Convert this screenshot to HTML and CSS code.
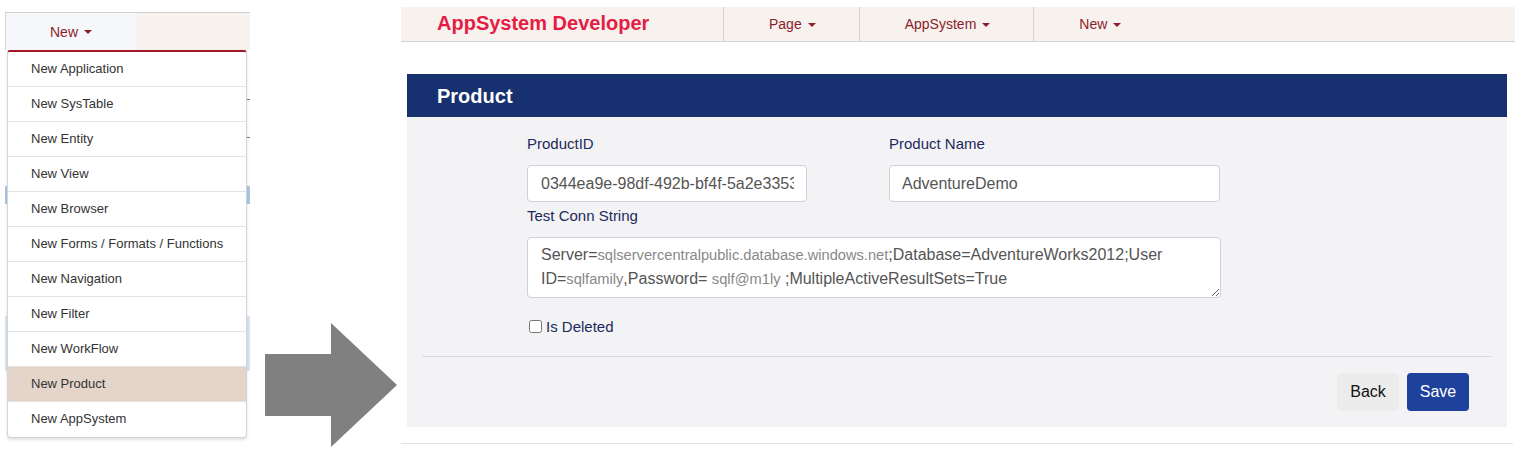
FILE: index.html
```html
<!DOCTYPE html>
<html>
<head>
<meta charset="utf-8">
<title>AppSystem Developer</title>
<link rel="stylesheet" href="styles.css">
</head>
<body>
<div class="page">
  <section class="left">
    <div class="lnav">
      <div class="nav-item open">New <span class="caret"></span></div>
      <div class="lnav-rest"></div>
    </div>
    <div class="under">
      <div class="under-tick t1"></div>
      <div class="under-tick t2"></div>
      <div class="under-band b1"></div>
      <div class="under-band b2"></div>
    </div>
    <ul class="dropdown">
      <li>New Application</li>
      <li>New SysTable</li>
      <li>New Entity</li>
      <li>New View</li>
      <li>New Browser</li>
      <li>New Forms / Formats / Functions</li>
      <li>New Navigation</li>
      <li>New Filter</li>
      <li>New WorkFlow</li>
      <li class="active">New Product</li>
      <li>New AppSystem</li>
    </ul>
  </section>

  <div class="arrow">
    <svg width="151" height="453" viewBox="0 0 151 453" aria-hidden="true">
      <polygon points="15,354 81,354 81,323 147,385 81,447 81,416 15,416" fill="#808080"/>
    </svg>
  </div>

  <section class="right">
    <nav class="navbar">
      <div class="brand">AppSystem Developer</div>
      <div class="nav-item">Page <span class="caret"></span></div>
      <div class="nav-item">AppSystem <span class="caret"></span></div>
      <div class="nav-item">New <span class="caret"></span></div>
    </nav>

    <div class="card">
      <div class="card-head">Product</div>
      <div class="card-body">
        <div class="form">
          <div class="field">
            <label class="lbl">ProductID</label>
            <input class="ctrl id-ctrl" type="text" value="0344ea9e-98df-492b-bf4f-5a2e33537c1d" readonly>
          </div>
          <div class="field">
            <label class="lbl">Product Name</label>
            <input class="ctrl name-ctrl" type="text" value="AdventureDemo">
          </div>
          <div class="field wide">
            <label class="lbl">Test Conn String</label>
            <div class="ctrl area">Server=<span class="dim">sqlservercentralpublic.database.windows.net</span>;Database=AdventureWorks2012;User<br>ID=<span class="dim">sqlfamily</span>,Password= <span class="dim">sqlf@m1ly</span> ;MultipleActiveResultSets=True</div>
          </div>
          <label class="check"><input type="checkbox" class="box">Is Deleted</label>
        </div>
        <hr class="sep">
        <div class="actions">
          <button class="btn back">Back</button>
          <button class="btn save">Save</button>
        </div>
      </div>
    </div>
    <div class="footer-line"></div>
  </section>
</div>
</body>
</html>
```

FILE: styles.css
```css
* { box-sizing: border-box; }

html, body {
  margin: 0;
  padding: 0;
  background: #ffffff;
  font-family: "Liberation Sans", Arial, sans-serif;
}

.page {
  display: flex;
  align-items: flex-start;
  width: 1523px;
  height: 453px;
  overflow: hidden;
}

/* ---------- left crop ---------- */
.left {
  position: relative;
  width: 250px;
  height: 453px;
  padding-left: 5px;
  padding-top: 12px;
  flex: none;
}

.lnav {
  display: flex;
  height: 38px;
  border-top: 1px solid #cfcfcf;
  background: #f7f2ee;
}

.lnav .nav-item {
  width: 131px;
  justify-content: center;
  padding: 0;
}

.nav-item.open {
  background: #f6f7fa;
}

.lnav-rest { flex: 1; }

.under {
  position: relative;
  height: 400px;
}

.under-tick {
  position: absolute;
  right: 0;
  width: 4px;
  height: 1px;
  background: #777;
}
.t1 { top: 49px; }
.t2 { top: 87px; }

.under-band {
  position: absolute;
  left: 0;
  right: 0;
  background: #d7e6f5;
}
.b1 { top: 136px; height: 18px; background: #a9c7e6; }
.b2 { top: 266px; height: 55px; }

.dropdown {
  position: absolute;
  left: 7px;
  top: 50px;
  width: 240px;
  margin: 0;
  padding: 0;
  list-style: none;
  background: #ffffff;
  border: 1px solid #d4d4d4;
  border-top: 2px solid #a5182a;
  border-radius: 3px 3px 4px 4px;
  box-shadow: 0 2px 3px rgba(0, 0, 0, 0.12);
}

.dropdown li {
  height: 35px;
  line-height: 34px;
  padding-left: 23px;
  font-size: 13px;
  color: #333333;
  border-bottom: 1px solid #e3e3e3;
}

.dropdown li:last-child { border-bottom: none; }

.dropdown li.active { background: #e5d4c9; }

/* ---------- arrow ---------- */
.arrow {
  width: 151px;
  height: 453px;
  flex: none;
}
.arrow svg { display: block; }

/* ---------- right app ---------- */
.right {
  width: 1114px;
  flex: none;
  padding-top: 7px;
}

.navbar {
  display: flex;
  height: 35px;
  background: #f7f2ee;
  border-bottom: 1px solid #d3d3d3;
}

.brand {
  width: 322px;
  padding-left: 36px;
  font-size: 20px;
  font-weight: bold;
  color: #e61c44;
  line-height: 32px;
}

.nav-item {
  display: flex;
  align-items: center;
  padding: 0 43px 0 45px;
  border-left: 1px solid #d9d3ce;
  font-size: 14px;
  color: #8c1d2c;
  white-space: nowrap;
}

.caret {
  display: inline-block;
  width: 0;
  height: 0;
  margin-left: 6px;
  margin-top: 1px;
  border-top: 4px solid #8c1d2c;
  border-left: 4px solid transparent;
  border-right: 4px solid transparent;
}

.card {
  margin: 32px 8px 0 6px;
}

.card-head {
  height: 43px;
  padding-left: 30px;
  background: #17306f;
  color: #ffffff;
  font-size: 20px;
  font-weight: bold;
  line-height: 45px;
}

.card-body {
  background: #f3f3f5;
  padding: 16px 15px 16px 15px;
}

.form {
  display: grid;
  grid-template-columns: 280px 331px;
  column-gap: 82px;
  row-gap: 3px;
  margin-left: 105px;
}

.field {
  display: flex;
  flex-direction: column;
}

.field.wide { grid-column: 1 / span 2; }

.lbl {
  font-size: 15px;
  line-height: 22px;
  color: #1d2a5b;
  margin-bottom: 10px;
}

.ctrl {
  height: 37px;
  border: 1px solid #cdd0d6;
  border-radius: 4px;
  background: #ffffff;
  font-family: "Liberation Sans", Arial, sans-serif;
  font-size: 16px;
  color: #555555;
  padding: 0 12px;
  outline: none;
}

.id-ctrl { width: 280px; padding-left: 13px; }
.name-ctrl { width: 331px; }

.area {
  width: 694px;
  height: 61px;
  padding: 5px 13px 0 13px;
  line-height: 24px;
  resize: vertical;
  overflow: auto;
  white-space: normal;
}

.dim {
  font-size: 14.67px;
  color: #888888;
}

.check {
  grid-column: 1 / span 2;
  display: flex;
  align-items: center;
  margin-top: 13px;
  height: 24px;
  font-size: 15px;
  color: #1d2a5b;
}

.box {
  width: 13px;
  height: 13px;
  margin: 0 4px 0 2px;
}

.sep {
  margin: 18px 0 0 0;
  border: none;
  border-top: 1px solid #dcdcdc;
  height: 0;
}

.actions {
  display: flex;
  justify-content: flex-end;
  gap: 8px;
  margin-top: 16px;
  padding-right: 23px;
}

.btn {
  width: 62px;
  height: 38px;
  border: none;
  border-radius: 4px;
  font-family: "Liberation Sans", Arial, sans-serif;
  font-size: 16px;
  padding: 0;
}

.back { background: #ececec; color: #111111; }
.save { background: #1e419b; color: #ffffff; }

.footer-line {
  margin-top: 16px;
  margin-right: 2px;
  border-top: 1px solid #e3e3e3;
}
```
